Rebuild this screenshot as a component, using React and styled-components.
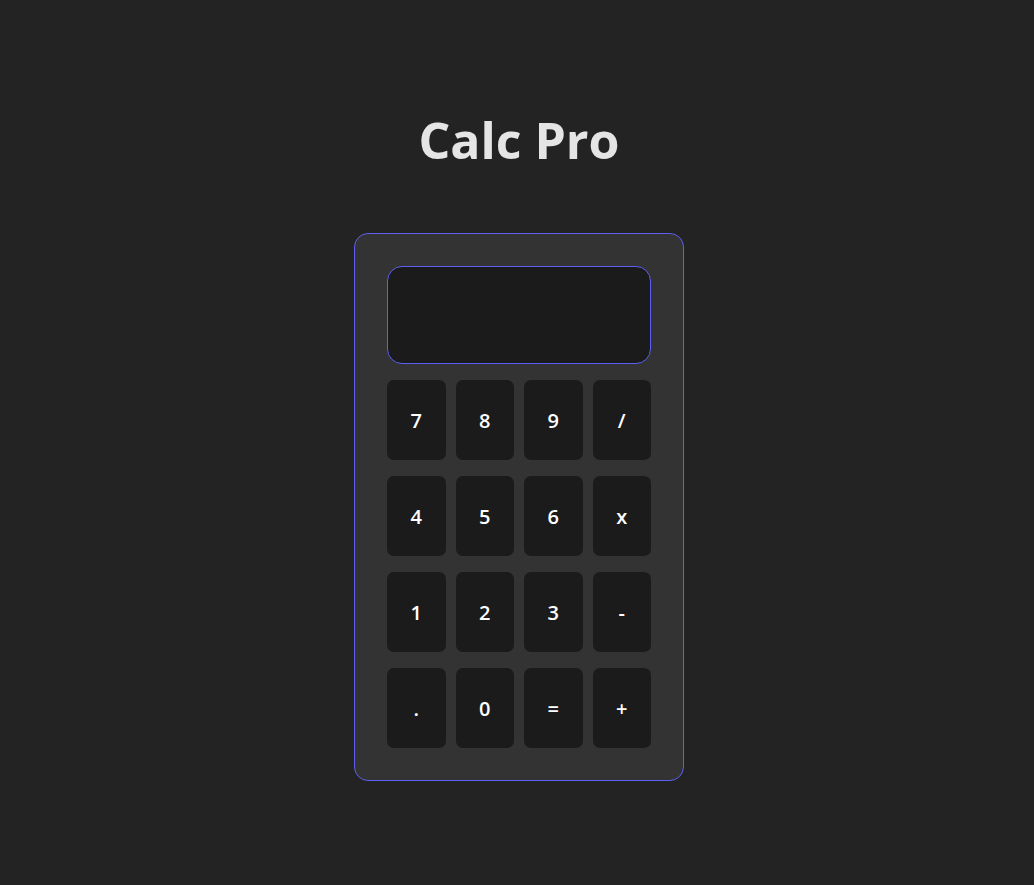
import React, { useState } from "react";
import styled, { createGlobalStyle } from "styled-components";

const GlobalStyle = createGlobalStyle`
  body {
    margin: 0;
    background-color: #232323;
    font-family: "Open Sans", "Noto Sans", sans-serif;
  }
`;

const keys = ["7", "8", "9", "/", "4", "5", "6", "x", "1", "2", "3", "-", ".", "0", "=", "+"];

export default function App() {
  const [display, setDisplay] = useState("");

  const press = (key) => {
    if (key === "=") {
      try {
        // eslint-disable-next-line no-new-func
        setDisplay(String(Function(`return (${display.replace(/x/g, "*")})`)()));
      } catch (e) {
        setDisplay("Error");
      }
      return;
    }
    setDisplay(display + key);
  };

  return (
    <>
      <GlobalStyle />
      <Page>
        <Title>Calc Pro</Title>
        <Calculator>
          <Display>{display}</Display>
          <Keypad>
            {keys.map((key) => (
              <Key key={key} onClick={() => press(key)}>
                {key}
              </Key>
            ))}
          </Keypad>
        </Calculator>
      </Page>
    </>
  );
}

const Page = styled.div`
  min-height: 885px;
  display: flex;
  flex-direction: column;
  align-items: center;
  padding: 105px 0 0 4px;
  box-sizing: border-box;
`;

const Title = styled.h1`
  margin: 0 0 58px;
  color: #e5e5e5;
  font-size: 50px;
  font-weight: 700;
  line-height: 70px;
  letter-spacing: 0;
`;

const Calculator = styled.div`
  width: 330px;
  box-sizing: border-box;
  padding: 32px;
  background-color: #333333;
  border: 1px solid #5d5ff2;
  border-radius: 14px;
  display: flex;
  flex-direction: column;
  gap: 16px;
`;

const Display = styled.div`
  height: 98px;
  box-sizing: border-box;
  background-color: #1b1b1b;
  border: 1px solid #5d5ff2;
  border-radius: 15px;
  color: #ffffff;
  font-size: 32px;
  display: flex;
  align-items: center;
  justify-content: flex-end;
  padding: 0 16px;
  overflow: hidden;
`;

const Keypad = styled.div`
  display: grid;
  grid-template-columns: repeat(4, 1fr);
  column-gap: 10px;
  row-gap: 16px;
`;

const Key = styled.button`
  height: 80px;
  border: none;
  border-radius: 7px;
  background-color: #1b1b1b;
  color: #ffffff;
  font-family: "Open Sans", "Noto Sans", sans-serif;
  font-size: 20px;
  font-weight: 600;
  cursor: pointer;
  padding: 0;
`;
